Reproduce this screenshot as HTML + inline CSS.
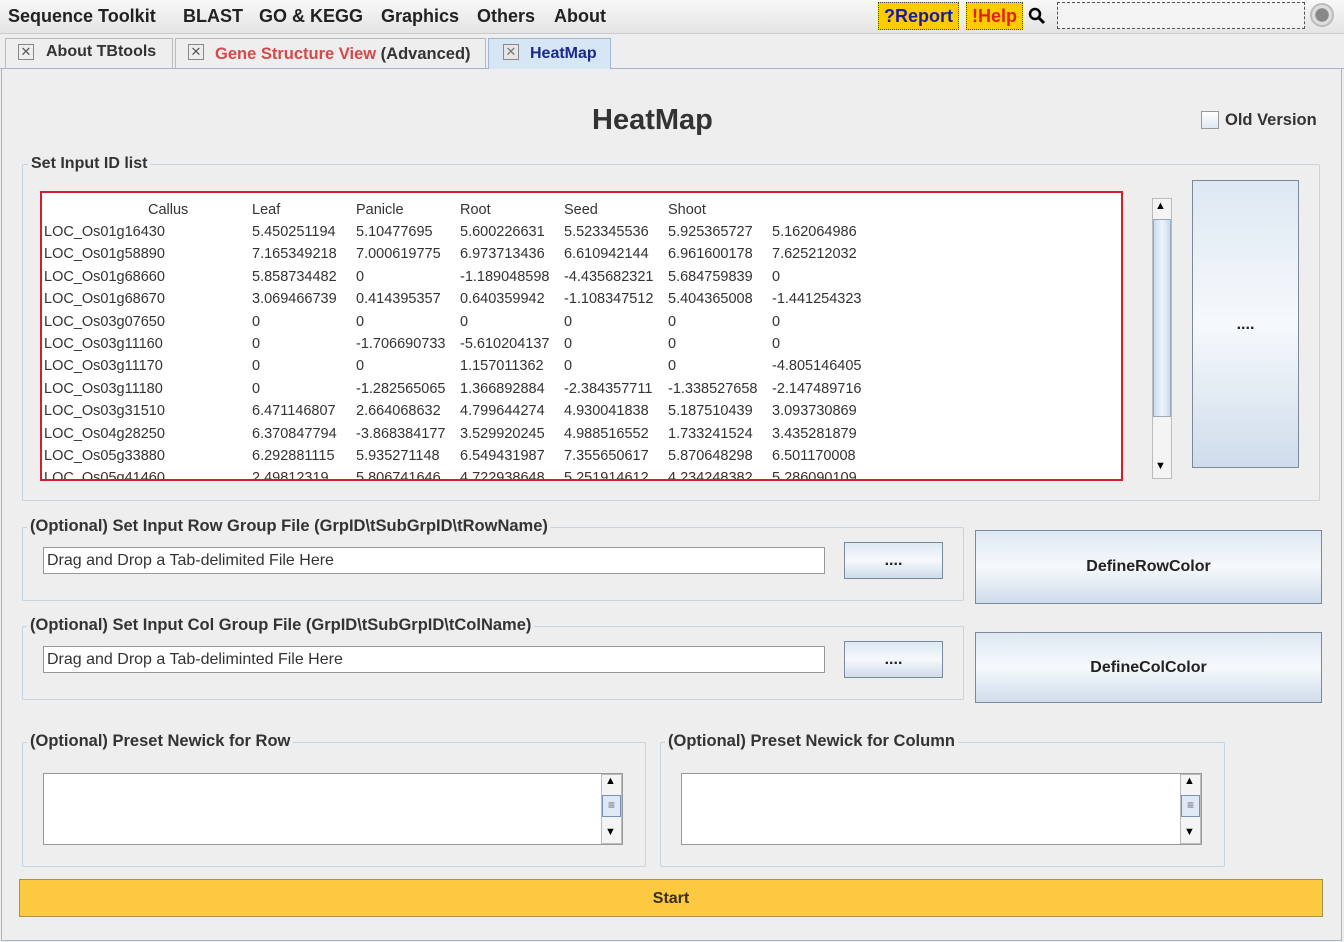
<!DOCTYPE html><html><head><style>
*{box-sizing:border-box}body{margin:0;width:1344px;height:942px;background:#eeeeee;font-family:"Liberation Sans",sans-serif;position:relative;overflow:hidden}
.a{position:absolute}
.b{font-weight:bold}
.m{position:absolute;top:6px;font-weight:bold;font-size:18px;color:#222;white-space:nowrap}
.grp{position:absolute;border:1px solid #c6d3e0;border-radius:2px}
.lbl{position:absolute;background:#eeeeee;font-weight:bold;font-size:16.5px;color:#333;padding:0 3px;white-space:nowrap}
.btn{position:absolute;border:1px solid #7a8a9a;background:linear-gradient(#dde8f3,#f6f9fc 50%,#cfdceb);text-align:center;font-size:16px;font-weight:bold;color:#222}
.fld{position:absolute;background:#fff;border:1px solid #999;font-size:16px;color:#333;padding:4px 3px}
.td{position:absolute;font-size:14.5px;color:#333;white-space:nowrap}
.sb{position:absolute;background:#f4f4f4;border:1px solid #bbb}
</style></head><body>
<div class="a" style="left:0;top:0;width:1344px;height:34px;background:linear-gradient(#f8f8f8,#e4e4e4);border-bottom:1px solid #ccc"></div>
<div class="m" style="left:8px">Sequence Toolkit</div>
<div class="m" style="left:183px">BLAST</div>
<div class="m" style="left:259px">GO &amp; KEGG</div>
<div class="m" style="left:381px">Graphics</div>
<div class="m" style="left:477px">Others</div>
<div class="m" style="left:554px">About</div>
<div class="a b" style="left:878px;top:2px;width:81px;height:28px;background:#fc0;border:1px dotted #444;color:#1a1aa0;font-size:18px;text-align:center;line-height:26px">?Report</div>
<div class="a b" style="left:966px;top:2px;width:57px;height:28px;background:#fc0;border:1px dotted #444;color:#e02020;font-size:18px;text-align:center;line-height:26px">!Help</div>
<svg class="a" style="left:1028px;top:7px" width="18" height="18"><circle cx="7" cy="7" r="5" fill="none" stroke="#000" stroke-width="2.5"/><line x1="11" y1="11" x2="16" y2="16" stroke="#000" stroke-width="3"/></svg>
<div class="a" style="left:1057px;top:2px;width:248px;height:27px;border:1px dashed #555;background:#f4f4f4"></div>
<div class="a" style="left:1310px;top:3px;width:24px;height:24px;border-radius:50%;border:2px solid #bbb;background:radial-gradient(#888 45%,#ddd 50%)"></div>
<div class="a" style="left:0;top:68px;width:1344px;height:1px;background:#9fb8d0"></div>
<div class="a" style="left:5px;top:38px;width:168px;height:30px;border:1px solid #bbb;border-bottom:none;background:#eee"></div>
<div class="a" style="left:175px;top:38px;width:311px;height:30px;border:1px solid #bbb;border-bottom:none;background:#eee"></div>
<div class="a" style="left:488px;top:38px;width:123px;height:31px;border:1px solid #9fb8d0;border-bottom:none;background:#d7e6f5"></div>
<div class="a" style="left:18px;top:44px;width:16px;height:16px;border:1px solid #888;background:#eee;font-size:13px;text-align:center;line-height:14px;color:#555">✕</div>
<div class="a" style="left:188px;top:44px;width:16px;height:16px;border:1px solid #888;background:#eee;font-size:13px;text-align:center;line-height:14px;color:#555">✕</div>
<div class="a" style="left:503px;top:44px;width:16px;height:16px;border:1px solid #888;background:#e6e6e6;font-size:13px;text-align:center;line-height:14px;color:#777">✕</div>
<div class="a b" style="left:46px;top:43px;font-size:16px;color:#333">About TBtools</div>
<div class="a b" style="left:215px;top:45px;font-size:16.5px;color:#333"><span style="color:#d84848">Gene Structure View</span> (Advanced)</div>
<div class="a b" style="left:530px;top:45px;font-size:16px;color:#1a2a8a">HeatMap</div>
<div class="a" style="left:1px;top:69px;width:1341px;height:872px;border:1px solid #9fb8d0;border-top:none"></div>
<div class="a b" style="left:592px;top:104px;font-size:29px;color:#333">HeatMap</div>
<div class="a" style="left:1201px;top:111px;width:18px;height:18px;border:1px solid #999;background:linear-gradient(#fff,#dde8f2)"></div>
<div class="a b" style="left:1225px;top:111px;font-size:16.5px;color:#333">Old Version</div>
<div class="grp" style="left:22px;top:164px;width:1298px;height:337px"></div>
<div class="lbl" style="left:28px;top:155px;font-size:16px">Set Input ID list</div>
<div class="a" style="left:40px;top:191px;width:1083px;height:290px;background:#fff;border:2px solid #d0202a;overflow:hidden">
<div class="td" style="left:106px;top:9px">Callus</div><div class="td" style="left:210px;top:9px">Leaf</div><div class="td" style="left:314px;top:9px">Panicle</div><div class="td" style="left:418px;top:9px">Root</div><div class="td" style="left:522px;top:9px">Seed</div><div class="td" style="left:626px;top:9px">Shoot</div>
<div id="rows"></div>
</div>
<div class="sb" style="left:1152px;top:198px;width:20px;height:281px"></div>
<div class="a" style="left:1153px;top:219px;width:18px;height:198px;background:linear-gradient(90deg,#c9dbee,#eef4fa,#c9dbee);border:1px solid #9ab"></div>
<div class="a" style="left:1155px;top:200px;font-size:11px">▲</div><div class="a" style="left:1155px;top:460px;font-size:11px">▼</div>
<div class="btn" style="left:1192px;top:180px;width:107px;height:288px;line-height:288px">....</div>
<div class="grp" style="left:22px;top:527px;width:942px;height:74px"></div>
<div class="lbl" style="left:27px;top:517px">(Optional) Set Input Row Group File (GrpID\tSubGrpID\tRowName)</div>
<div class="fld" style="left:43px;top:547px;width:782px;height:27px">Drag and Drop a Tab-delimited File Here</div>
<div class="btn" style="left:844px;top:542px;width:99px;height:37px;line-height:36px">....</div>
<div class="btn" style="left:975px;top:530px;width:347px;height:74px;line-height:72px">DefineRowColor</div>
<div class="grp" style="left:22px;top:626px;width:942px;height:74px"></div>
<div class="lbl" style="left:27px;top:616px">(Optional) Set Input Col Group File (GrpID\tSubGrpID\tColName)</div>
<div class="fld" style="left:43px;top:646px;width:782px;height:27px">Drag and Drop a Tab-deliminted File Here</div>
<div class="btn" style="left:844px;top:641px;width:99px;height:37px;line-height:36px">....</div>
<div class="btn" style="left:975px;top:632px;width:347px;height:71px;line-height:70px">DefineColColor</div>
<div class="grp" style="left:22px;top:742px;width:624px;height:125px"></div>
<div class="lbl" style="left:27px;top:732px">(Optional) Preset Newick for Row</div>
<div class="fld" style="left:43px;top:773px;width:580px;height:72px"></div>
<div class="sb" style="left:601px;top:774px;width:21px;height:70px"></div>
<div class="a" style="left:602px;top:795px;width:19px;height:22px;border:1px solid #7a8fb8;background:#dfe8f5;text-align:center;font-size:12px;line-height:18px;color:#667">≡</div>
<div class="a" style="left:605px;top:775px;font-size:11px">▲</div><div class="a" style="left:605px;top:826px;font-size:11px">▼</div>
<div class="grp" style="left:660px;top:742px;width:565px;height:125px"></div>
<div class="lbl" style="left:665px;top:732px">(Optional) Preset Newick for Column</div>
<div class="fld" style="left:681px;top:773px;width:521px;height:72px"></div>
<div class="sb" style="left:1180px;top:774px;width:21px;height:70px"></div>
<div class="a" style="left:1181px;top:795px;width:19px;height:22px;border:1px solid #7a8fb8;background:#dfe8f5;text-align:center;font-size:12px;line-height:18px;color:#667">≡</div>
<div class="a" style="left:1184px;top:775px;font-size:11px">▲</div><div class="a" style="left:1184px;top:826px;font-size:11px">▼</div>
<div class="a b" style="left:19px;top:879px;width:1304px;height:38px;background:#fcc940;border:1px solid #a89050;text-align:center;line-height:37px;font-size:16px;color:#3a3020">Start</div>
<script>
var d=[["LOC_Os01g16430","5.450251194","5.10477695","5.600226631","5.523345536","5.925365727","5.162064986"],
["LOC_Os01g58890","7.165349218","7.000619775","6.973713436","6.610942144","6.961600178","7.625212032"],
["LOC_Os01g68660","5.858734482","0","-1.189048598","-4.435682321","5.684759839","0"],
["LOC_Os01g68670","3.069466739","0.414395357","0.640359942","-1.108347512","5.404365008","-1.441254323"],
["LOC_Os03g07650","0","0","0","0","0","0"],
["LOC_Os03g11160","0","-1.706690733","-5.610204137","0","0","0"],
["LOC_Os03g11170","0","0","1.157011362","0","0","-4.805146405"],
["LOC_Os03g11180","0","-1.282565065","1.366892884","-2.384357711","-1.338527658","-2.147489716"],
["LOC_Os03g31510","6.471146807","2.664068632","4.799644274","4.930041838","5.187510439","3.093730869"],
["LOC_Os04g28250","6.370847794","-3.868384177","3.529920245","4.988516552","1.733241524","3.435281879"],
["LOC_Os05g33880","6.292881115","5.935271148","6.549431987","7.355650617","5.870648298","6.501170008"],
["LOC_Os05g41460","2.49812319","5.806741646","4.722938648","5.251914612","4.234248382","5.286090109"]];
var h="";d.forEach(function(r,i){r.forEach(function(c,j){h+='<div class="td" style="left:'+(2+104*j+(j?104:0))+'px;top:'+(31+i*22.4)+'px">'+c+'</div>'})});
document.getElementById("rows").innerHTML=h;
</script>
</body></html>
